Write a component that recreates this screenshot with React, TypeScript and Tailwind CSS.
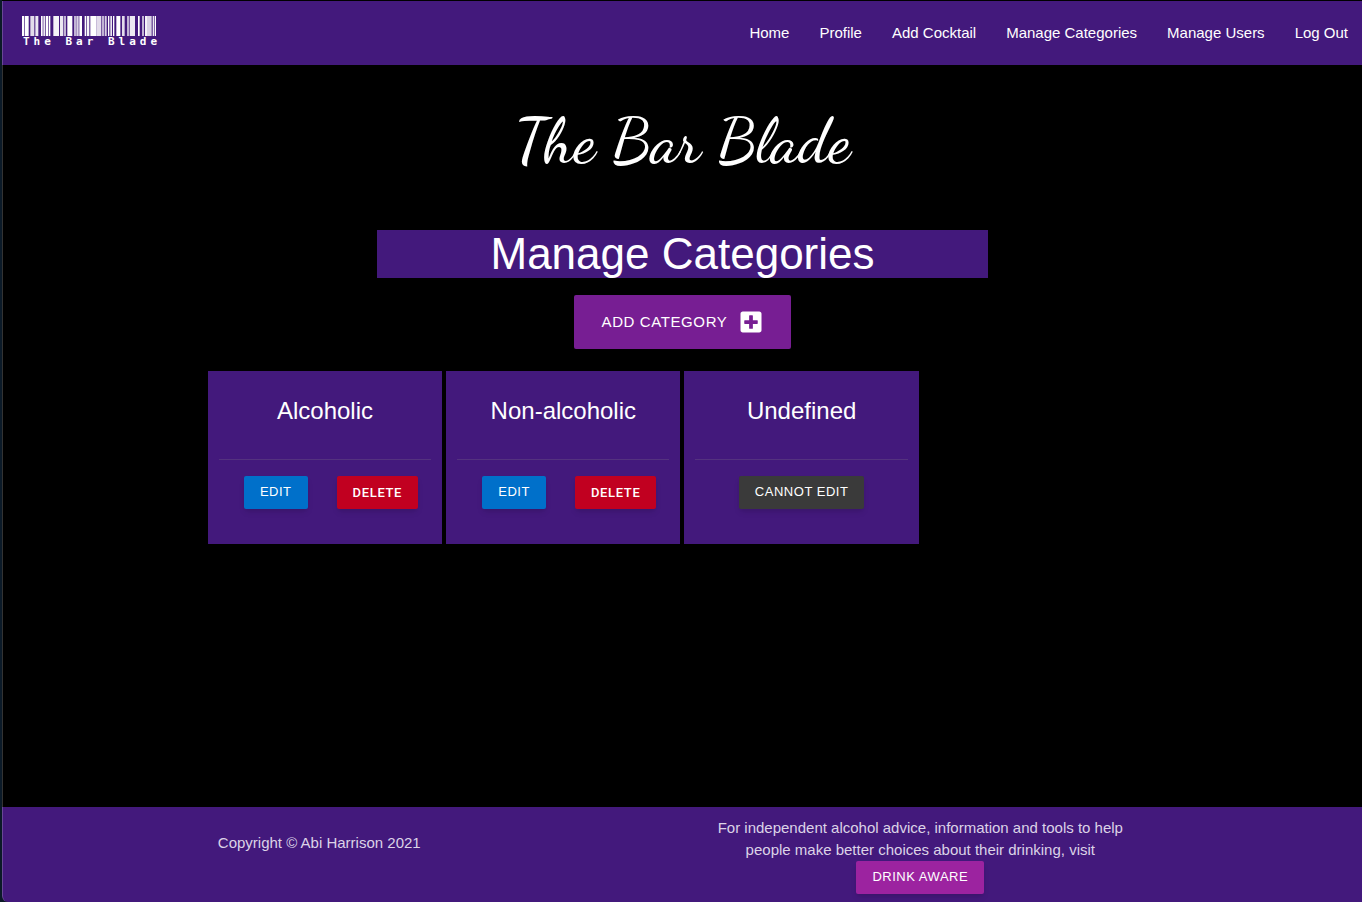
import { FaPlusSquare } from "react-icons/fa";

const links = ["Home", "Profile", "Add Cocktail", "Manage Categories", "Manage Users", "Log Out"];

const categories = [
  { name: "Alcoholic", editable: true },
  { name: "Non-alcoholic", editable: true },
  { name: "Undefined", editable: false },
];

// Bars as [start, width, opacity] on a 402-unit wide strip.
const bars: [number, number, number][] = [
  [0, 6, 1], [8, 12, 1], [25, 12, 0.85], [40, 9, 0.9], [57, 5, 1], [64, 6, 0.9], [72, 7, 1], [81, 4, 1],
  [94, 17, 0.95], [114, 10, 0.9], [127, 4, 1], [136, 15, 1], [157, 4, 1], [163, 7, 0.8], [172, 8, 1],
  [188, 4, 1], [194, 8, 0.95], [205, 18, 1], [223, 15, 0.85], [241, 4, 1], [248, 6, 0.8], [258, 4, 1],
  [265, 5, 0.9], [273, 4, 1], [283, 12, 1], [300, 8, 0.85], [316, 4, 1], [323, 16, 0.9], [348, 5, 1],
  [361, 4, 1], [369, 6, 0.95], [375, 14, 0.8], [392, 4, 0.9], [398, 4, 1],
];

function Logo() {
  return (
    <a href="#" className="flex flex-col pb-[2px]">
      <svg viewBox="0 0 402 60" preserveAspectRatio="none" className="h-5 w-[134px]" aria-hidden="true">
        {bars.map(([x, w, o]) => (
          <rect key={x} x={x} width={w} height="60" fill="#fff" opacity={o} />
        ))}
      </svg>
      <span className="pl-px font-['DejaVu_Sans_Mono',monospace] text-[11px] leading-3 font-bold tracking-[4px]">
        The Bar Blade
      </span>
    </a>
  );
}

const smallButton = "h-[33px] rounded-xs px-4 text-[13px] text-white uppercase shadow-md";

export default function App() {
  return (
    <div className="min-h-screen bg-[#0b1a28] pl-[2px] font-['Liberation_Sans',Arial,sans-serif] text-[15px] text-white">
      <div className="flex min-h-screen flex-col rounded-bl-md bg-black">
        <header className="mt-px flex h-16 items-center justify-between border-l border-white/20 bg-[#43197c] pr-[14px] pl-[19px]">
          <Logo />
          <nav className="flex gap-[30px]">
            {links.map((l) => (
              <a key={l} href="#">{l}</a>
            ))}
          </nav>
        </header>

        <main className="flex grow flex-col items-center border-l border-white/20">
          <p className="mt-8 font-['Dancing_Script',cursive] text-[63px] leading-[88px] font-medium">The Bar Blade</p>
          <h1 className="mt-[45px] w-[45%] bg-[#43197c] text-center text-[44px] leading-[48px]">
            Manage Categories
          </h1>
          <button className="mt-[17px] flex h-[54px] items-center gap-3 rounded-xs bg-[#771e93] px-7 tracking-[0.04em] uppercase">
            Add Category
            <FaPlusSquare size={24} />
          </button>
          <section className="mt-[22px] grid w-[70%] grid-cols-4 gap-1 px-px">
            {categories.map((c) => (
              <article key={c.name} className="flex h-[173px] flex-col bg-[#43197c] px-[11px] text-center">
                <h2 className="mt-6 h-16 text-2xl leading-8">{c.name}</h2>
                <div className="border-t border-[#54327f] pt-4">
                  {c.editable ? (
                    <div className="flex justify-center gap-[29px] pl-3">
                      <button className={smallButton + " bg-[#0070ca] pb-[2px] tracking-[0.04em]"}>Edit</button>
                      <button className={smallButton + " bg-[#c10020] font-['Roboto',sans-serif] font-medium tracking-wider"}>
                        Delete
                      </button>
                    </div>
                  ) : (
                    <button className={smallButton + " bg-[#3a3a3a] pb-[2px] tracking-[0.04em]"}>Cannot Edit</button>
                  )}
                </div>
              </article>
            ))}
          </section>
        </main>

        <footer className="flex h-[95px] justify-center rounded-bl-md border-l border-white/20 bg-[#43197c]">
          <div className="flex w-[70%] text-[#dcd3e7]">
            <p className="w-1/2 pt-[25px] pl-[11px] leading-[22px]">Copyright © Abi Harrison 2021</p>
            <div className="flex w-1/2 flex-col items-center px-[11px] pt-[10px] text-center leading-[22px]">
              <p className="max-w-[420px]">
                For independent alcohol advice, information and tools to help people make better choices about their
                drinking, visit
              </p>
              <button className={smallButton + " bg-[#9c23a0] pb-[2px] tracking-[0.04em]"}>Drink Aware</button>
            </div>
          </div>
        </footer>
      </div>
    </div>
  );
}
